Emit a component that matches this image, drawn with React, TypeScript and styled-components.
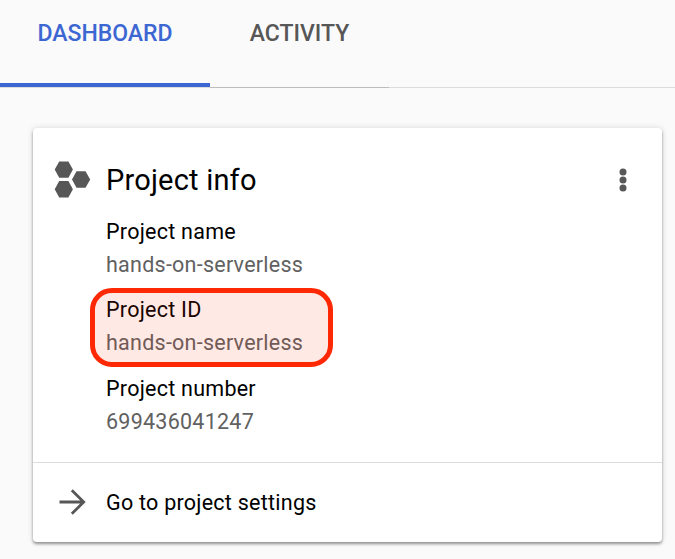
import React from "react";
import styled, { createGlobalStyle } from "styled-components";

const GlobalStyle = createGlobalStyle`
  * { box-sizing: border-box; }
  body {
    margin: 0;
    background: #fafafa;
    font-family: Roboto, sans-serif;
    color: #000;
    overflow: hidden;
  }
`;

const Page = styled.div`
  height: 559px;
  display: flex;
  flex-direction: column;
`;

const TabBar = styled.nav`
  display: flex;
  height: 88px;
  box-shadow: inset 0 -1px #dcdcdc;
`;

const Tab = styled.div<{ $active?: boolean; $width: number; $spacing: number }>`
  width: ${(p) => p.$width}px;
  height: ${(p) => (p.$active ? 87 : 88)}px;
  padding-top: 20px;
  text-align: center;
  font-size: 23px;
  font-weight: 500;
  line-height: 28px;
  letter-spacing: ${(p) => p.$spacing}px;
  color: ${(p) => (p.$active ? "#3c67d2" : "#575757")};
  border-bottom: ${(p) => (p.$active ? "4px solid #3c67d2" : "1px solid #bcbcbc")};
`;

const Card = styled.section`
  width: 629px;
  height: 414px;
  margin: 39.5px 0 0 33px;
  display: flex;
  flex-direction: column;
  background: #fff;
  border-radius: 4px;
  box-shadow: 0 2px 3px rgba(0, 0, 0, 0.38), 0 0 7px rgba(0, 0, 0, 0.12);
`;

const CardHeader = styled.header`
  display: flex;
  align-items: center;
  height: 104px;
  padding: 0 32px 0 21px;
`;

const Title = styled.h2`
  flex: 1;
  margin: 0 0 0 15px;
  font-size: 29px;
  font-weight: 400;
  line-height: 36px;
  letter-spacing: 0.2px;
`;

const Details = styled.dl`
  margin: -17px 0 0 57px;
  flex: 1;
`;

const Entry = styled.div<{ $marked?: boolean }>`
  position: relative;
  width: 243px;
  height: 78.5px;
  padding-left: 16px;
  ${(p) =>
    p.$marked &&
    `&::after {
      content: "";
      position: absolute;
      inset: -5px 0 5px 0;
      border: 5px solid #ff2804;
      border-radius: 22px;
      background: rgba(255, 40, 4, 0.1);
      background-clip: padding-box;
    }`}
`;

const Label = styled.dt`
  font-size: 21.5px;
  line-height: 33px;
  letter-spacing: 0.25px;
  white-space: nowrap;
`;

const Value = styled.dd`
  margin: 0;
  font-size: 21.5px;
  line-height: 33px;
  letter-spacing: 0.25px;
  color: #616161;
  white-space: nowrap;
`;

const SettingsLink = styled.footer`
  display: flex;
  align-items: center;
  height: 80px;
  padding-left: 26px;
  border-top: 1px solid #dcdcdc;
`;

const LinkText = styled.span`
  margin-left: 20px;
  font-size: 21.5px;
  letter-spacing: 0.25px;
`;

const entries = [
  { label: "Project name", value: "hands-on-serverless" },
  { label: "Project ID", value: "hands-on-serverless", marked: true },
  { label: "Project number", value: "699436041247" },
];

const HexIcon = () => (
  <svg width="37" height="37" viewBox="0 0 37 37" fill="#575757">
    <path d="M5.2 .5h9.2l4.5 8-4.5 8.3H5.2L.7 8.5z" />
    <path d="M5.2 20h9.2l4.5 8.3-4.5 8.2H5.2L.7 28.3z" />
    <path d="M22.5 10.3h9l4.7 8.2-4.7 8.3h-9L18 18.5z" />
  </svg>
);

const MoreIcon = () => (
  <svg width="14" height="26" viewBox="0 0 14 26" fill="#575757">
    <circle cx="7" cy="5" r="3.5" />
    <circle cx="7" cy="13" r="3.5" />
    <circle cx="7" cy="21" r="3.5" />
  </svg>
);

const ArrowIcon = () => (
  <svg width="27" height="26" viewBox="0 0 27 26" fill="none" stroke="#575757" strokeWidth="2.8">
    <path d="M.5 13h24.5M12.8 1.2L24.7 13 12.8 24.8" />
  </svg>
);

export default function App() {
  return (
    <Page>
      <GlobalStyle />
      <TabBar>
        <Tab $active $width={210} $spacing={0}>DASHBOARD</Tab>
        <Tab $width={179} $spacing={0}>ACTIVITY</Tab>
      </TabBar>
      <Card>
        <CardHeader>
          <HexIcon />
          <Title>Project info</Title>
          <MoreIcon />
        </CardHeader>
        <Details>
          {entries.map((e) => (
            <Entry key={e.label} $marked={e.marked}>
              <Label>{e.label}</Label>
              <Value>{e.value}</Value>
            </Entry>
          ))}
        </Details>
        <SettingsLink>
          <ArrowIcon />
          <LinkText>Go to project settings</LinkText>
        </SettingsLink>
      </Card>
    </Page>
  );
}
